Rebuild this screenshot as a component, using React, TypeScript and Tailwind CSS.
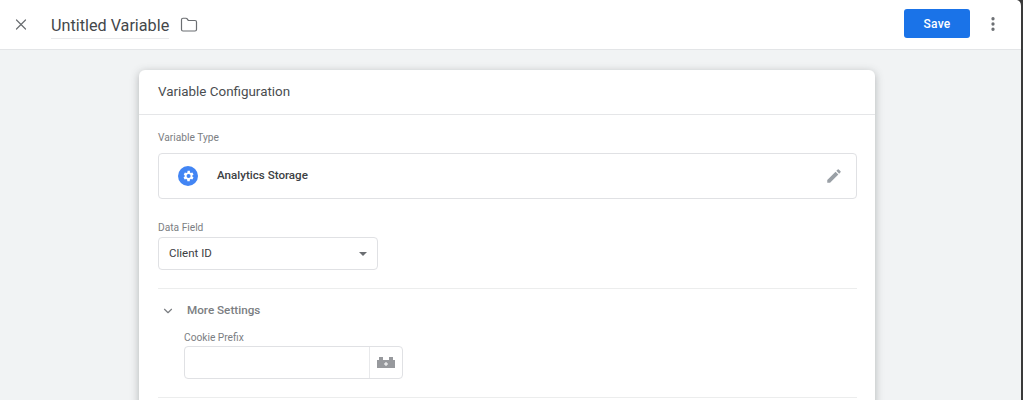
import React from 'react';
import { X, Folder, MoreVertical, ChevronDown } from 'lucide-react';

const App: React.FC = () => {
  return (
    <div className="relative w-[1024px] h-[400px] overflow-hidden bg-[#f1f3f4] font-['Roboto',sans-serif] text-[#3c4043]">
      {/* Top bar */}
      <header className="h-[50px] bg-white border-b border-[#e3e5e7] flex items-center pl-[11px] pr-[22px]">
        <button className="w-[18px] h-[18px] flex items-center justify-center text-[#6b6e72] ml-[1px]">
          <X size={21} strokeWidth={1.6} />
        </button>
        <div className="ml-[21px] h-[28px] border-b border-[#e8e9eb] flex items-center pt-[3px]">
          <span className="text-[16.2px] leading-[26px] text-[#44474a]">Untitled Variable</span>
        </div>
        <Folder size={18} strokeWidth={1.6} className="ml-[11px] text-[#6b6e72]" />
        <button className="ml-auto mb-[2px] w-[66px] h-[29px] rounded-[3px] bg-[#1a73e8] text-white text-[12px] font-medium tracking-[0.2px]">
          Save
        </button>
        <MoreVertical size={18} strokeWidth={2.4} className="ml-[14px] mb-[2px] text-[#6b6e72]" />
      </header>

      {/* Card */}
      <main className="flex justify-center pt-[20px]">
        <section className="w-[736px] mr-[10px] bg-white rounded-t-[6px] shadow-[0_2px_8px_rgba(60,64,67,0.35)] h-[340px]">
          <div className="h-[45px] px-[19px] flex items-center border-b border-[#e5e6e8]">
            <h2 className="text-[13.4px] text-[#4a4d50]">Variable Configuration</h2>
          </div>

          <div className="pl-[19px] pr-[18px]">
            <div className="pt-[16px] text-[10.2px] leading-[14px] text-[#7b7e82]">Variable Type</div>
            <div className="mt-[8px] h-[46px] rounded-[4px] border border-[#e0e1e4] flex items-center pl-[19px] pr-[13px]">
              <span className="w-[20px] h-[20px] rounded-full bg-[#4285f4] flex items-center justify-center">
                <svg width="14" height="14" viewBox="0 0 24 24" fill="#ffffff">
                  <path d="M19.4 13a7.5 7.5 0 0 0 0-2l2.1-1.6-2-3.500-2.500 1a7.600 7.600 0 0 0-1.700-1L15.300 3.200h-4l-.4 2.700a7.600 7.600 0 0 0-1.700 1l-2.500-1-2 3.500L6.400 11a7.500 7.500 0 0 0 0 2l-2.100 1.600 2 3.500 2.500-1a7.600 7.600 0 0 0 1.700 1l.4 2.700h4l.4-2.700a7.600 7.600 0 0 0 1.700-1l2.500 1 2-3.500zM13 15.500a3.500 3.500 0 1 1 0-7 3.500 3.500 0 0 1 0 7z" />
                </svg>
              </span>
              <span className="ml-[19px] text-[11.6px] font-medium text-[#3c4043]">Analytics Storage</span>
              <svg className="ml-auto" width="18" height="18" viewBox="0 0 24 24" fill="#9aa0a6">
                <path d="M3 17.250V21h3.750L17.810 9.940l-3.750-3.750L3 17.250zM20.710 7.040a1 1 0 0 0 0-1.410l-2.340-2.340a1 1 0 0 0-1.410 0l-1.830 1.830 3.750 3.750 1.830-1.830z" />
              </svg>
            </div>

            <div className="mt-[22px] text-[10.2px] leading-[14px] text-[#7b7e82]">Data Field</div>
            <div className="mt-[2px] w-[220px] h-[33px] rounded-[4px] border border-[#e0e1e4] flex items-center pl-[10px] pr-[10px]">
              <span className="text-[11.5px] text-[#3c4043]">Client ID</span>
              <span className="ml-auto w-0 h-0 border-x-[4.5px] border-x-transparent border-t-[4.5px] border-t-[#6b6e72]" />
            </div>

            <div className="mt-[18px] border-t border-[#eceded]">
              <div className="mt-[14px] h-[16px] flex items-center">
                <ChevronDown size={14} strokeWidth={2} className="ml-[3px] text-[#7b7e82]" />
                <span className="ml-[12px] text-[11.7px] font-medium text-[#7b7e82]">More Settings</span>
              </div>
              <div className="pl-[26px]">
                <div className="mt-[12px] text-[10.2px] leading-[14px] text-[#7b7e82]">Cookie Prefix</div>
                <div className="mt-[1px] w-[219px] h-[33px] rounded-[4px] border border-[#e0e1e4] flex">
                  <div className="flex-1" />
                  <div className="w-[33px] border-l border-[#e8e9eb] flex items-center justify-center">
                    <svg width="20" height="11" viewBox="0 0 20 11" fill="#97999d">
                      <path d="M1 3h2V0h4v3h6V0h4v3h2v8H1z" />
                      <path d="M9.500 5h1v1.500H12v1h-1.500V9h-1V7.500H8v-1h1.500z" fill="#ffffff" />
                    </svg>
                  </div>
                </div>
              </div>
            </div>

            <div className="mt-[18px] border-t border-[#eceded]" />
          </div>
        </section>
      </main>

      {/* Window edge caught in the screenshot */}
      <div className="absolute inset-y-0 right-0 w-[3px] bg-[#3a3a3a] border-r border-white" />
      <svg className="absolute top-0 right-[1px]" width="6" height="6" viewBox="0 0 6 6" fill="#3a3a3a">
        <path d="M0 0H6V6H4Q4 1 0 0z" />
      </svg>
    </div>
  );
};

export default App;
